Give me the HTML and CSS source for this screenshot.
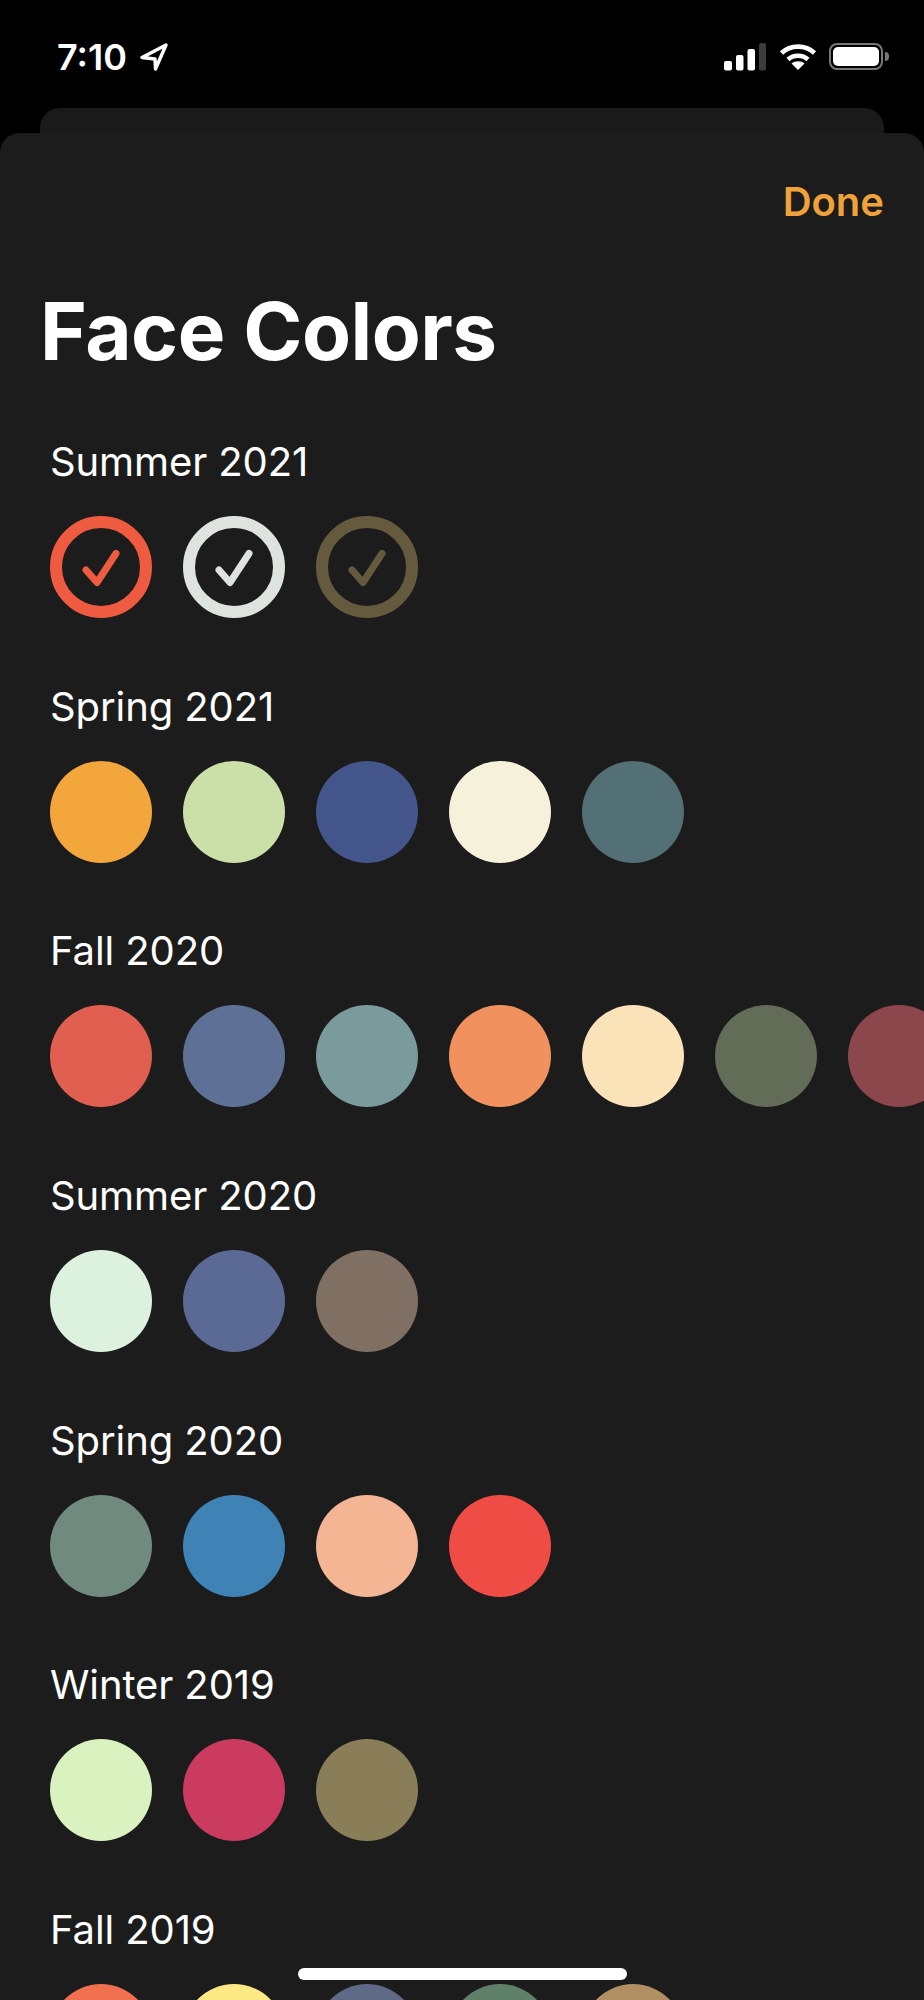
FILE: index.html
```html
<!DOCTYPE html>
<html lang="en">
<head>
    <meta charset="UTF-8">
    <meta name="viewport" content="width=device-width, initial-scale=1.0">
    <title>Face Colors</title>
    <link rel="stylesheet" href="styles.css">
</head>
<body>
    <div class="status-bar">
        <div class="status-left">
            <span class="time">7:10</span>
            <svg class="location" width="28" height="28" viewBox="0 0 28 28">
                <path d="M26 2 L2 14.5 L15 16 L15.5 26 Z" fill="none" stroke="#fff" stroke-width="3.4" stroke-linejoin="round"/>
            </svg>
        </div>
        <div class="status-right">
            <svg class="signal" width="44" height="28" viewBox="0 0 44 28">
                <rect x="0" y="18" width="8" height="9.5" rx="2" fill="#fff"/>
                <rect x="12" y="12" width="7.5" height="15.5" rx="2" fill="#fff"/>
                <rect x="23.5" y="6" width="7.5" height="21.5" rx="2" fill="#fff"/>
                <rect x="35" y="0" width="7" height="27.5" rx="2" fill="#3c3c3c"/>
            </svg>
            <svg class="wifi" width="38" height="28" viewBox="0 0 38 28">
                <path d="M2.5 10 C11.5 1.5 26.5 1.5 35.5 10" fill="none" stroke="#fff" stroke-width="4.6"/>
                <path d="M9 16.5 C14.5 11.5 23.5 11.5 29 16.5" fill="none" stroke="#fff" stroke-width="4.6"/>
                <path d="M19 27 L12.5 20.5 C16 17.5 22 17.5 25.5 20.5 Z" fill="#fff"/>
            </svg>
            <div class="battery"><div class="battery-fill"></div></div>
            <div class="battery-cap"></div>
        </div>
    </div>

    <div class="back-card"></div>

    <div class="sheet">
        <div class="sheet-top"><span class="done">Done</span></div>
        <h1>Face Colors</h1>

        <div class="season">
            <div class="season-name">Summer 2021</div>
            <div class="swatches">
                <svg class="ring" viewBox="0 0 102 102" style="color: #ee5b41">
                    <circle cx="51" cy="51" r="45" fill="none" stroke="currentColor" stroke-width="12"/>
                    <path d="M36 54 L47 66.500 L66 37.500" fill="none" stroke="currentColor" stroke-width="7" stroke-linecap="round" stroke-linejoin="round"/>
                </svg>
                <svg class="ring" viewBox="0 0 102 102" style="color: #dfe3df">
                    <circle cx="51" cy="51" r="45" fill="none" stroke="currentColor" stroke-width="12"/>
                    <path d="M36 54 L47 66.500 L66 37.500" fill="none" stroke="currentColor" stroke-width="7" stroke-linecap="round" stroke-linejoin="round"/>
                </svg>
                <svg class="ring" viewBox="0 0 102 102" style="color: #655a3e">
                    <circle cx="51" cy="51" r="45" fill="none" stroke="currentColor" stroke-width="12"/>
                    <path d="M36 54 L47 66.500 L66 37.500" fill="none" stroke="currentColor" stroke-width="7" stroke-linecap="round" stroke-linejoin="round"/>
                </svg>
            </div>
        </div>

        <div class="season">
            <div class="season-name">Spring 2021</div>
            <div class="swatches">
                <div class="dot" style="background: #f3a63c"></div>
                <div class="dot" style="background: #cbe0a9"></div>
                <div class="dot" style="background: #44558b"></div>
                <div class="dot" style="background: #f5f1da"></div>
                <div class="dot" style="background: #527076"></div>
            </div>
        </div>

        <div class="season">
            <div class="season-name">Fall 2020</div>
            <div class="swatches">
                <div class="dot" style="background: #e05f50"></div>
                <div class="dot" style="background: #5f7097"></div>
                <div class="dot" style="background: #7b9a9c"></div>
                <div class="dot" style="background: #f1915d"></div>
                <div class="dot" style="background: #fbe3b9"></div>
                <div class="dot" style="background: #636c57"></div>
                <div class="dot" style="background: #8c474c"></div>
            </div>
        </div>

        <div class="season">
            <div class="season-name">Summer 2020</div>
            <div class="swatches">
                <div class="dot" style="background: #dcf1de"></div>
                <div class="dot" style="background: #5a6a94"></div>
                <div class="dot" style="background: #7f7063"></div>
            </div>
        </div>

        <div class="season">
            <div class="season-name">Spring 2020</div>
            <div class="swatches">
                <div class="dot" style="background: #708a80"></div>
                <div class="dot" style="background: #3e82b6"></div>
                <div class="dot" style="background: #f4b595"></div>
                <div class="dot" style="background: #ee4c45"></div>
            </div>
        </div>

        <div class="season">
            <div class="season-name">Winter 2019</div>
            <div class="swatches">
                <div class="dot" style="background: #d9f2c0"></div>
                <div class="dot" style="background: #cb3a5f"></div>
                <div class="dot" style="background: #8a7e58"></div>
            </div>
        </div>

        <div class="season">
            <div class="season-name">Fall 2019</div>
            <div class="swatches">
                <div class="dot" style="background: #f07050"></div>
                <div class="dot" style="background: #fdea85"></div>
                <div class="dot" style="background: #5f6a86"></div>
                <div class="dot" style="background: #5e7f68"></div>
                <div class="dot" style="background: #b09062"></div>
            </div>
        </div>
    </div>

    <div class="home-indicator"></div>
</body>
</html>
```

FILE: styles.css
```css
html, body {
    height: 2000px;
}

body {
    font-family: 'Inter', 'Liberation Sans', sans-serif;
    background: #000;
    color: #fff;
    margin: 0;
    overflow: hidden;
    position: relative;
}

.status-bar {
    height: 108px;
    box-sizing: border-box;
    padding: 42px 35px 0 57px;
    display: flex;
    justify-content: space-between;
    align-items: flex-start;
}

.status-left {
    display: flex;
    align-items: center;
    gap: 13px;
}

.time {
    font-size: 36px;
    font-weight: 600;
    line-height: 30px;
}

.status-right {
    display: flex;
    align-items: flex-start;
}

.signal {
    margin-top: 1px;
    margin-right: 11px;
}

.wifi {
    margin-top: 1px;
    margin-right: 12px;
}

.battery {
    width: 54px;
    height: 27px;
    margin-top: 1px;
    box-sizing: border-box;
    border: 2px solid #777;
    border-radius: 8px;
    padding: 2px;
}

.battery-fill {
    height: 100%;
    background: #fff;
    border-radius: 5px;
}

.battery-cap {
    width: 4px;
    height: 9px;
    margin: 10px 0 0 2px;
    background: #777;
    border-radius: 0 4px 4px 0;
}

.back-card {
    height: 25px;
    margin: 0 40px;
    background: #1a1a1a;
    border-radius: 20px 20px 0 0;
}

.sheet {
    height: 1867px;
    background: #1c1c1c;
    border-radius: 20px 20px 0 0;
    overflow: hidden;
}

.sheet-top {
    display: flex;
    justify-content: flex-end;
    padding: 44px 40px 0 0;
}

.done {
    color: #f0a23a;
    font-size: 40px;
    font-weight: 600;
    line-height: 50px;
}

h1 {
    margin: 59px 0 0 40px;
    font-size: 80px;
    font-weight: 700;
    line-height: 90px;
    letter-spacing: -0.5px;
}

.season {
    height: 244.67px;
    padding-left: 50px;
}

.sheet h1 + .season {
    margin-top: 63px;
}

.season-name {
    font-size: 40px;
    line-height: 46px;
    letter-spacing: -0.1px;
    margin-bottom: 31px;
}

.swatches {
    display: flex;
    gap: 31px;
}

.dot, .ring {
    width: 102px;
    height: 102px;
    flex: none;
}

.dot {
    border-radius: 50%;
}

.home-indicator {
    position: absolute;
    left: 298px;
    top: 1968px;
    width: 329px;
    height: 12px;
    background: #fff;
    border-radius: 6px;
}
```
